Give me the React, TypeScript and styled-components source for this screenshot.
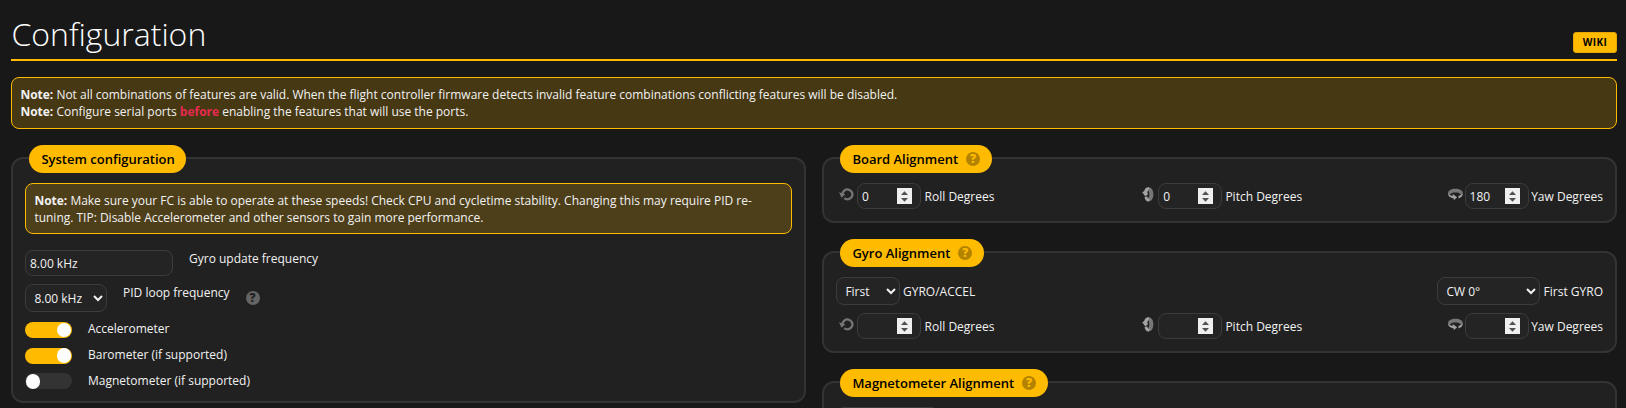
import React from "react";
import styled, { createGlobalStyle } from "styled-components";

const GlobalStyle = createGlobalStyle`
  * { box-sizing: border-box; }
  html, body { margin: 0; background: #181818; }
  body {
    height: 408px;
    overflow: hidden;
    color: #f2f2f2;
    font: 12px/17px "Open Sans", sans-serif;
  }
  input, select, button { font-family: inherit; }
`;

const Page = styled.main`
  height: 408px;
  overflow: hidden;
  padding: 0 9px 0 11px;
`;

const Header = styled.header`
  display: flex;
  justify-content: space-between;
  align-items: flex-end;
  height: 61px;
  border-bottom: 2px solid #ffbb00;
`;

const Title = styled.h1`
  margin: 0 0 5px 0.4px;
  font-size: 32px;
  line-height: 40px;
  font-weight: 300;
  color: #fff;
`;

const WikiButton = styled.button`
  width: 44px;
  height: 21px;
  margin-bottom: 6px;
  padding: 0;
  border: 1px solid #e6a800;
  border-radius: 3px;
  background: #ffbb00;
  color: #000;
  font-size: 10px;
  line-height: 17px;
  font-weight: 700;
  letter-spacing: 0.4px;
`;

const Note = styled.div<{ $height?: number }>`
  flex: 1;
  height: ${(p) => p.$height ?? 52}px;
  padding: 8px 8px 8px 8.4px;
  border: 1px solid #ffbb00;
  border-radius: 8px;
  background: rgba(255, 187, 0, 0.2);
  letter-spacing: -0.007px;
`;

const Warn = styled.strong`
  color: #e6294f;
`;

const Columns = styled.div`
  display: grid;
  grid-template-columns: 1fr 1fr;
  gap: 16px;
  margin-top: 16px;
`;

const Column = styled.div`
  display: flex;
  flex-direction: column;
  gap: 16px;
`;

const Panel = styled.section<{ $height: number }>`
  height: ${(p) => p.$height}px;
  margin-top: 12px;
  padding: 0 12px;
  border: 2px solid #333;
  border-radius: 12px;
  background: #212121;
`;

const Legend = styled.h2`
  display: flex;
  align-items: center;
  gap: 8px;
  width: fit-content;
  height: 28px;
  margin: -14px 0 10px 4px;
  padding: 0 11.6px 0 12.4px;
  border-radius: 14px;
  background: #ffbb00;
  color: #000;
  font-size: 13px;
  font-weight: 600;
  white-space: nowrap;
`;

const Help = styled.span<{ $onLegend?: boolean }>`
  display: flex;
  align-items: center;
  justify-content: center;
  width: 14px;
  height: 14px;
  border-radius: 50%;
  background: ${(p) => (p.$onLegend ? "#b38300" : "#646464")};
  color: ${(p) => (p.$onLegend ? "#ffbb00" : "#212121")};
  font-size: 12px;
  line-height: 14px;
  font-weight: 800;
`;

const field = `
  border: 1px solid #3c3c3c;
  border-radius: 8px;
  background-color: #242424;
  color: #f2f2f2;
  font-size: 12px;
  margin: 0;
  outline: none;
`;

const TextInput = styled.input`
  ${field}
  width: 148px;
  height: 26px;
  padding: 1px 4px;
`;

const NumberField = styled.span`
  ${field}
  display: flex;
  align-items: center;
  width: 64px;
  height: 26px;
  margin-right: 0.6px;
  padding: 0 8px 0 4px;
`;

const NumberInput = styled.input`
  flex: 1;
  min-width: 0;
  height: 24px;
  padding: 0;
  border: 0;
  outline: none;
  background: transparent;
  color: inherit;
  font-size: 12px;
`;

const Stepper = styled.svg`
  flex: none;
  width: 15px;
  height: 16px;
  background: #efefef;
`;

const Select = styled.select<{ $width: number }>`
  ${field}
  width: ${(p) => p.$width}px;
  height: 28px;
  padding: 0 0 0 4.4px;
`;

const FieldRow = styled.div<{ $top: number }>`
  display: flex;
  align-items: flex-start;
  margin-top: ${(p) => p.$top}px;
`;

const FieldLabel = styled.label`
  margin-left: 16px;
`;

const HelpSlot = styled.span`
  margin: 7px 0 0 16px;
`;

const ToggleList = styled.div`
  display: grid;
  grid-auto-rows: 25.67px;
  margin-top: 10px;
`;

const ToggleRow = styled.div`
  display: flex;
  align-items: flex-start;
  gap: 16px;
`;

const Track = styled.span<{ $on: boolean }>`
  display: flex;
  justify-content: ${(p) => (p.$on ? "flex-end" : "flex-start")};
  align-items: center;
  width: 47px;
  height: 16px;
  padding: 0 0.8px;
  border-radius: 8px;
  background: ${(p) => (p.$on ? "#ffbb00" : "#333")};
  &::after {
    content: "";
    width: 14.6px;
    height: 14.6px;
    border-radius: 50%;
    background: #fff;
  }
`;

const ToggleLabel = styled.span`
  margin-top: -1.6px;
`;

const Row = styled.div<{ $top?: number }>`
  display: flex;
  justify-content: space-between;
  align-items: flex-start;
  margin-top: ${(p) => p.$top ?? 0}px;
`;

const Item = styled.label<{ $indent?: number; $gap?: number }>`
  display: flex;
  align-items: center;
  gap: ${(p) => p.$gap ?? 3}px;
  margin-left: ${(p) => p.$indent ?? 0}px;
  white-space: nowrap;
`;

const AxisIcon = styled.svg`
  width: 15px;
  height: 15px;
  margin-bottom: 4px;
`;

type Axis = "roll" | "pitch" | "yaw";

const layout: Record<Axis, { indent: number; gap: number }> = {
  roll: { indent: 3, gap: 3 },
  pitch: { indent: 1, gap: 2.5 },
  yaw: { indent: 0, gap: 2 },
};

const Glyph = ({ axis }: { axis: Axis }) => {
  if (axis === "roll")
    return (
      <AxisIcon viewBox="0 0 15 15">
        <path d="M3.500 7.500A4.950 4.950 0 1 1 5.300 11.200" fill="none" stroke="#757575" strokeWidth="2.300" />
        <path d="M0 5.300L6.300 7.300L2.500 10.700z" fill="#757575" />
      </AxisIcon>
    );
  if (axis === "pitch")
    return (
      <AxisIcon viewBox="0 0 15 15">
        <path d="M7 .2C10.200-.2 12.400 3 12.400 7.300S10.200 14.900 7 14.500l-1-2.300c1.500-.7 2.300-2.500 2.300-4.900S7.500 3 6 2.300z" fill="#777" />
        <path d="M7.600.2C5.300.1 3.700 1.700 3 4.300L1.200 5.300 4.300 9.600 7.200 7 6.300 6.100C6.500 4.200 7.200 2.800 8.500 2z" fill="#a3a3a3" />
        <path d="M3.500 10.200c.6 2.700 2 4.300 4.100 4.400L8.700 12.300c-1.400-.2-2.200-1.200-2.500-3z" fill="#a3a3a3" />
      </AxisIcon>
    );
  return (
    <AxisIcon viewBox="0 0 15 15">
      <path d="M.1 6C.1 3.400 3.200 1.800 7.400 1.800s7.400 1.600 7.400 4.200c0 1-.3 1.700-.9 2.300L12.200 6.900C11.300 6 9.600 5.600 7.400 5.600s-3.900.4-4.800 1.300L1.200 8.300C.5 7.700.1 7 .1 6z" fill="#777" />
      <path d="M.1 6.200c.7 1.400 2.200 2.300 4.600 2.800V6.900l4.400 3.300-3.300 3V11.400C2.200 10.800.1 9.200.1 6.800z" fill="#a3a3a3" />
      <path d="M14.800 6.200c.1 2.400-1.300 4.300-4.300 5.200V8.900c1.400-.4 3.300-1.100 4.300-2.700z" fill="#a3a3a3" />
    </AxisIcon>
  );
};

const Degrees = ({ axis, label, value }: { axis: Axis; label: string; value: string }) => (
  <Item $indent={layout[axis].indent} $gap={layout[axis].gap}>
    <Glyph axis={axis} />
    <NumberField>
      <NumberInput defaultValue={value} inputMode="numeric" />
      <Stepper viewBox="0 0 15 16">
        <path d="M4 7L7.500 3.200L11 7zM4 10L7.500 13.800L11 10z" fill="#505050" />
      </Stepper>
    </NumberField>
    {label}
  </Item>
);

const AlignmentRow = ({ values, top }: { values: string[]; top?: number }) => (
  <Row $top={top}>
    <Degrees axis="roll" label="Roll Degrees" value={values[0]} />
    <Degrees axis="pitch" label="Pitch Degrees" value={values[1]} />
    <Degrees axis="yaw" label="Yaw Degrees" value={values[2]} />
  </Row>
);

const Choice = ({ value, width }: { value: string; width: number }) => (
  <Select $width={width} defaultValue={value}>
    <option>{value}</option>
  </Select>
);

const toggles = [
  { label: "Accelerometer", on: true },
  { label: "Barometer (if supported)", on: true },
  { label: "Magnetometer (if supported)", on: false },
];

export default function App() {
  return (
    <>
      <GlobalStyle />
      <Page>
        <Header>
          <Title>Configuration</Title>
          <WikiButton>WIKI</WikiButton>
        </Header>
        <FieldRow $top={16}>
          <Note>
            <strong>Note:</strong> Not all combinations of features are valid. When the flight controller firmware
            detects invalid feature combinations conflicting features will be disabled.
            <br />
            <strong>Note:</strong> Configure serial ports <Warn>before</Warn> enabling the features that will use the
            ports.
          </Note>
        </FieldRow>
        <Columns>
          <Column>
            <Panel $height={246}>
              <Legend>System configuration</Legend>
              <Note $height={51}>
                <strong>Note:</strong> Make sure your FC is able to operate at these speeds! Check CPU and cycletime
                stability. Changing this may require PID re-tuning. TIP: Disable Accelerometer and other sensors to
                gain more performance.
              </Note>
              <FieldRow $top={16}>
                <TextInput defaultValue="8.00 kHz" readOnly />
                <FieldLabel>Gyro update frequency</FieldLabel>
              </FieldRow>
              <FieldRow $top={8}>
                <Choice value="8.00 kHz" width={82} />
                <FieldLabel>PID loop frequency</FieldLabel>
                <HelpSlot>
                  <Help>?</Help>
                </HelpSlot>
              </FieldRow>
              <ToggleList>
                {toggles.map((t) => (
                  <ToggleRow key={t.label}>
                    <Track $on={t.on} />
                    <ToggleLabel>{t.label}</ToggleLabel>
                  </ToggleRow>
                ))}
              </ToggleList>
            </Panel>
          </Column>
          <Column>
            <Panel $height={66}>
              <Legend>
                Board Alignment <Help $onLegend>?</Help>
              </Legend>
              <AlignmentRow values={["0", "0", "180"]} />
            </Panel>
            <Panel $height={102}>
              <Legend>
                Gyro Alignment <Help $onLegend>?</Help>
              </Legend>
              <Row>
                <Item>
                  <Choice value="First" width={64} />
                  GYRO/ACCEL
                </Item>
                <Item $gap={3.6}>
                  <Choice value="CW 0°" width={103} />
                  First GYRO
                </Item>
              </Row>
              <AlignmentRow values={["", "", ""]} top={8} />
            </Panel>
            <Panel $height={102}>
              <Legend>
                Magnetometer Alignment <Help $onLegend>?</Help>
              </Legend>
              <Row>
                <Choice value="" width={103} />
              </Row>
            </Panel>
          </Column>
        </Columns>
      </Page>
    </>
  );
}
